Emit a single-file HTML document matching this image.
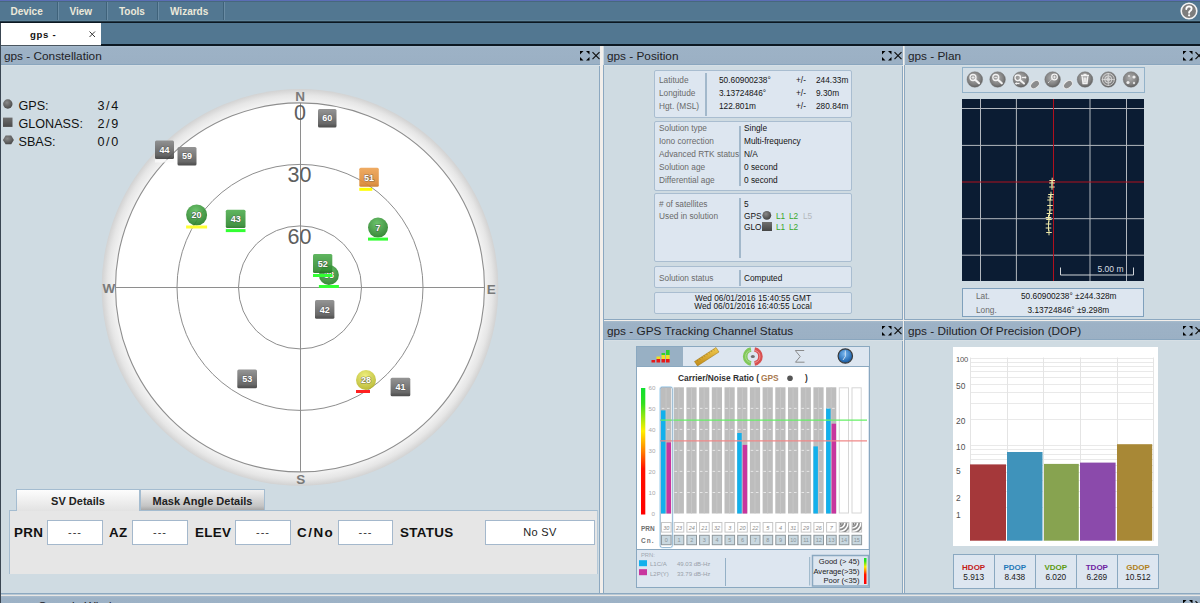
<!DOCTYPE html>
<html><head><meta charset="utf-8">
<style>
*{box-sizing:border-box}
html,body{margin:0;padding:0;width:1200px;height:603px;overflow:hidden;background:#cfdbe2;font-family:"Liberation Sans",sans-serif;position:relative}
.a{position:absolute}
.menu{left:0;top:0;width:1200px;height:23px;background:#527791;border-top:1px solid #5b6db5}
.menu .it{position:absolute;top:1px;height:20px;color:#ece9da;font-weight:bold;font-size:10px;line-height:20px;white-space:nowrap}
.menu .sep{position:absolute;top:1px;width:2px;height:20px;border-left:1px solid #3f627a;border-right:1px solid #6a8ca4}
.tabbar{left:0;top:23px;width:1200px;height:23px;background:#527791}
.hdr{position:absolute;height:19px;background:linear-gradient(#a8bccd,#9db2c6 2px,#9bb0c4);border-bottom:1px solid #8aa6be;box-shadow:0 1px 0 #d6dfe5;font-size:11.8px;color:#1e2226;line-height:21px;padding-left:3px;white-space:nowrap}
.cnt{position:absolute;background:#cfdbe2}
.vb{position:absolute;background:#8ca8c0;width:1px}
.hb{position:absolute;background:#8ca8c0;height:1px}
.wv{position:absolute;background:#f3efeb}
.mx{position:absolute;width:10px;height:10px}
.lab{font-size:13.4px;font-weight:bold;color:#111;line-height:16px;letter-spacing:0.3px}
.inp{height:25px;background:#fff;border:1px solid #a4b8cc;font-size:11px;line-height:23px;text-align:center;color:#333;letter-spacing:1px}
.pbox{background:#dde6f0;border:1px solid #a9bdd0;border-radius:2px}
.pl{font-size:8.3px;line-height:12px;color:#6a6a6a;white-space:nowrap}
.pv{font-size:8.3px;line-height:12px;color:#141414;white-space:nowrap}
.cls{position:absolute;width:8px;height:8px}
</style></head><body>
<!-- menu -->
<div class="a menu">
  <div class="it" style="left:10.5px">Device</div>
  <div class="sep" style="left:57px"></div>
  <div class="it" style="left:69.5px">View</div>
  <div class="sep" style="left:106px"></div>
  <div class="it" style="left:119px">Tools</div>
  <div class="sep" style="left:157px"></div>
  <div class="it" style="left:170px">Wizards</div>
  <div class="sep" style="left:223px"></div>
  <div class="a" style="left:0;top:19px;width:1200px;height:1px;background:#5d8299"></div>
</div>
<div class="a" style="left:0;top:21px;width:1200px;height:1px;background:#243a48"></div><div class="a" style="left:0;top:22px;width:1200px;height:1px;background:#0c1822"></div><div class="a" style="left:0;top:1px;width:1200px;height:1px;background:#46687e"></div>
<!-- help icon -->
<svg class="a" style="left:1180px;top:1.5px" width="18" height="18" viewBox="0 0 18 18">
 <circle cx="9" cy="9" r="7.8" fill="#7d7d7d" stroke="#f4f4f4" stroke-width="1.6"/>
 <path d="M6.3 7.0 Q6.4 4.4 9.1 4.4 Q11.7 4.5 11.6 6.8 Q11.5 8.3 10 9.1 Q9.1 9.6 9.1 10.8" fill="none" stroke="#fff" stroke-width="1.9" stroke-linecap="round"/>
 <circle cx="9.1" cy="13.3" r="1.15" fill="#fff"/>
</svg>
<!-- tab bar -->
<div class="a tabbar"></div>
<div class="a" style="left:0;top:44px;width:1200px;height:2px;background:#0c1822"></div>
<div class="a" style="left:1px;top:23px;width:100px;height:22px;background:#fff"></div>
<div class="a" style="left:0;top:45px;width:101px;height:1px;background:#4a5660"></div>
<div class="a" style="left:30px;top:28px;font-weight:bold;font-size:9.6px;line-height:14px;color:#111;letter-spacing:0.7px">gps -</div>
<svg class="a" style="left:89px;top:31px" width="7" height="7"><path d="M0.5 0.5L6 6M6 0.5L0.5 6" stroke="#222" stroke-width="0.9"/></svg>

<!-- splitters -->
<div class="a" style="left:0;top:23px;width:1px;height:580px;background:#3a4652"></div>
<div class="wv" style="left:600px;top:46px;width:3px;height:547px"></div>
<div class="vb" style="left:599px;top:65px;height:528px"></div>
<div class="vb" style="left:603px;top:65px;height:528px"></div>
<div class="wv" style="left:903px;top:46px;width:1px;height:547px"></div>
<div class="vb" style="left:902px;top:65px;height:528px"></div>
<div class="vb" style="left:904px;top:65px;height:528px"></div>
<div class="wv" style="left:604px;top:320px;width:596px;height:1px"></div>
<div class="hb" style="left:604px;top:319px;width:298px"></div>
<div class="hb" style="left:905px;top:319px;width:295px"></div>
<div class="hb" style="left:1px;top:593px;width:1199px"></div>
<div class="a" style="left:1px;top:594px;width:1199px;height:1px;background:#b8c8d4"></div><div class="a" style="left:1px;top:595px;width:1199px;height:1px;background:#e8e6e4"></div>
<div class="hdr" style="left:1px;top:596px;width:1199px;padding-left:37px">Console Window</div>
<svg class="a" style="left:1183px;top:600px" width="22" height="10"><g fill="#000"><path d="M0 0h3.5L0 3.5z"/><path d="M9.5 0h-3.5L9.5 3.5z"/></g><path d="M12.5 1.2L19.5 8.2M19.5 1.2L12.5 8.2" stroke="#111" stroke-width="1.2"/></svg>

<!-- headers -->
<div class="hdr" style="left:1px;top:46px;width:599px">gps - Constellation</div>
<div class="hdr" style="left:604px;top:46px;width:299px">gps - Position</div>
<div class="hdr" style="left:905px;top:46px;width:295px">gps - Plan</div>
<div class="hdr" style="left:604px;top:321px;width:299px">gps - GPS Tracking Channel Status</div>
<div class="hdr" style="left:905px;top:321px;width:295px">gps - Dilution Of Precision (DOP)</div>

<!-- maximize / close icons -->
<svg class="a" style="left:580px;top:51px" width="22" height="10">
 <g fill="#000"><path d="M0 0h3.5L0 3.5z"/><path d="M9.5 0h-3.5L9.5 3.5z"/><path d="M0 9.5h3.5L0 6z"/><path d="M9.5 9.5h-3.5L9.5 6z"/></g>
 <path d="M12.5 1.2L19.5 8.2M19.5 1.2L12.5 8.2" stroke="#111" stroke-width="1.2"/>
</svg>
<svg class="a" style="left:882px;top:51px" width="22" height="10">
 <g fill="#000"><path d="M0 0h3.5L0 3.5z"/><path d="M9.5 0h-3.5L9.5 3.5z"/><path d="M0 9.5h3.5L0 6z"/><path d="M9.5 9.5h-3.5L9.5 6z"/></g>
 <path d="M12.5 1.2L19.5 8.2M19.5 1.2L12.5 8.2" stroke="#111" stroke-width="1.2"/>
</svg>
<svg class="a" style="left:1183px;top:51px" width="22" height="10">
 <g fill="#000"><path d="M0 0h3.5L0 3.5z"/><path d="M9.5 0h-3.5L9.5 3.5z"/><path d="M0 9.5h3.5L0 6z"/><path d="M9.5 9.5h-3.5L9.5 6z"/></g>
 <path d="M12.5 1.2L19.5 8.2M19.5 1.2L12.5 8.2" stroke="#111" stroke-width="1.2"/>
</svg>
<svg class="a" style="left:882px;top:326px" width="22" height="10">
 <g fill="#000"><path d="M0 0h3.5L0 3.5z"/><path d="M9.5 0h-3.5L9.5 3.5z"/><path d="M0 9.5h3.5L0 6z"/><path d="M9.5 9.5h-3.5L9.5 6z"/></g>
 <path d="M12.5 1.2L19.5 8.2M19.5 1.2L12.5 8.2" stroke="#111" stroke-width="1.2"/>
</svg>
<svg class="a" style="left:1183px;top:326px" width="22" height="10">
 <g fill="#000"><path d="M0 0h3.5L0 3.5z"/><path d="M9.5 0h-3.5L9.5 3.5z"/><path d="M0 9.5h3.5L0 6z"/><path d="M9.5 9.5h-3.5L9.5 6z"/></g>
 <path d="M12.5 1.2L19.5 8.2M19.5 1.2L12.5 8.2" stroke="#111" stroke-width="1.2"/>
</svg>

<!-- CONSTELLATION -->
<svg class="a" style="left:0;top:65px" width="599" height="528" viewBox="0 65 599 528">
<defs>
<radialGradient id="ring" cx="300" cy="287.4" r="198.3" gradientUnits="userSpaceOnUse">
 <stop offset="0.93" stop-color="#f4f4f4"/><stop offset="0.97" stop-color="#e6e6e6"/><stop offset="1" stop-color="#d2d2d2"/>
</radialGradient>
<linearGradient id="gsq" x1="0" y1="0" x2="0" y2="1"><stop offset="0" stop-color="#8a8a8a"/><stop offset="0.8" stop-color="#585858"/><stop offset="0.88" stop-color="#4a4a4a"/><stop offset="1" stop-color="#3a3a3a"/></linearGradient>
<linearGradient id="grsq" x1="0" y1="0" x2="0" y2="1"><stop offset="0" stop-color="#4fae4f"/><stop offset="0.85" stop-color="#2f8a2f"/><stop offset="1" stop-color="#246c24"/></linearGradient>
<linearGradient id="orsq" x1="0" y1="0" x2="0" y2="1"><stop offset="0" stop-color="#eea456"/><stop offset="0.85" stop-color="#dc8a36"/><stop offset="1" stop-color="#c87626"/></linearGradient>
<radialGradient id="grc" cx="0.45" cy="0.3" r="0.7"><stop offset="0" stop-color="#5cbd5c"/><stop offset="1" stop-color="#237a23"/></radialGradient>
<radialGradient id="yec" cx="0.45" cy="0.3" r="0.7"><stop offset="0" stop-color="#eeee70"/><stop offset="1" stop-color="#b4b424"/></radialGradient>
<radialGradient id="lgc" cx="0.4" cy="0.35" r="0.7"><stop offset="0" stop-color="#8a8a8a"/><stop offset="1" stop-color="#4a4a4a"/></radialGradient>
</defs>
<circle cx="300" cy="287.4" r="198.3" fill="url(#ring)"/>
<circle cx="300" cy="287.4" r="184.5" fill="#fff" stroke="#8e8e8e" stroke-width="1.1"/>
<circle cx="300" cy="287.4" r="123.00" fill="none" stroke="#8e8e8e" stroke-width="1"/>
<circle cx="300" cy="287.4" r="61.50" fill="none" stroke="#8e8e8e" stroke-width="1"/>
<path d="M115.5 287.5H484.5M300.5 102.89999999999998V471.9" stroke="#8e8e8e" stroke-width="1"/>
<g style="font-family:'Liberation Sans',sans-serif" fill="#5e5e5e" font-size="21.5" text-anchor="middle">
<text x="300" y="120.3">0</text><text x="299.5" y="182.3">30</text><text x="299.5" y="243.7">60</text></g>
<g style="font-family:'Liberation Sans',sans-serif" fill="#7a7a7a" font-size="13.5" font-weight="bold" text-anchor="middle">
<text x="300" y="101">N</text><text x="108.8" y="293.3">W</text><text x="491.2" y="293.6">E</text><text x="300.8" y="484">S</text></g>
<g opacity="0.9"><rect x="318" y="109" width="18.5" height="18.5" rx="1.5" fill="url(#gsq)"/><text x="327.25" y="121.45" text-anchor="middle" font-size="9" font-weight="bold" fill="#fff" style="font-family:'Liberation Sans',sans-serif" stroke="#3a3a3a" stroke-opacity="0.55" stroke-width="1.2" paint-order="stroke">60</text></g>
<rect x="155" y="159.5" width="19" height="3" fill="#fafafa" opacity="0.8"/>
<g opacity="0.9"><rect x="155" y="140.5" width="19" height="18.5" rx="1.5" fill="url(#gsq)"/><text x="164.5" y="152.95" text-anchor="middle" font-size="9" font-weight="bold" fill="#fff" style="font-family:'Liberation Sans',sans-serif" stroke="#3a3a3a" stroke-opacity="0.55" stroke-width="1.2" paint-order="stroke">44</text></g>
<g opacity="0.9"><rect x="177.5" y="147" width="19" height="18.5" rx="1.5" fill="url(#gsq)"/><text x="187.0" y="159.45" text-anchor="middle" font-size="9" font-weight="bold" fill="#fff" style="font-family:'Liberation Sans',sans-serif" stroke="#3a3a3a" stroke-opacity="0.55" stroke-width="1.2" paint-order="stroke">59</text></g>
<g opacity="0.92"><rect x="359.3" y="167.8" width="19.5" height="19" rx="1.5" fill="url(#orsq)"/><text x="369.05" y="180.5" text-anchor="middle" font-size="9" font-weight="bold" fill="#fff" style="font-family:'Liberation Sans',sans-serif" stroke="#3a3a3a" stroke-opacity="0.55" stroke-width="1.2" paint-order="stroke">51</text></g><rect x="359.3" y="187.8" width="13" height="3" fill="#ffff00"/>
<circle cx="196.6" cy="215" r="10.5" fill="url(#grc)" opacity="0.9"/><text x="196.6" y="218.2" text-anchor="middle" font-size="9" font-weight="bold" fill="#fff" style="font-family:'Liberation Sans',sans-serif" stroke="#3a3a3a" stroke-opacity="0.55" stroke-width="1.2" paint-order="stroke">20</text><rect x="186.1" y="225.5" width="21.0" height="3" fill="#ffff33"/>
<g opacity="0.9"><rect x="225.8" y="209.8" width="19.7" height="18.3" rx="1.5" fill="url(#grsq)"/><text x="235.65" y="222.15" text-anchor="middle" font-size="9" font-weight="bold" fill="#fff" style="font-family:'Liberation Sans',sans-serif" stroke="#3a3a3a" stroke-opacity="0.55" stroke-width="1.2" paint-order="stroke">43</text></g><rect x="225.8" y="229.10000000000002" width="19.7" height="3" fill="#33ff33"/>
<circle cx="378" cy="227.6" r="10" fill="url(#grc)" opacity="0.9"/><text x="378" y="230.79999999999998" text-anchor="middle" font-size="9" font-weight="bold" fill="#fff" style="font-family:'Liberation Sans',sans-serif" stroke="#3a3a3a" stroke-opacity="0.55" stroke-width="1.2" paint-order="stroke">7</text><rect x="368" y="237.6" width="20" height="3" fill="#33ff33"/>
<circle cx="328.9" cy="275" r="10" fill="url(#grc)" opacity="0.9"/><text x="328.9" y="278.2" text-anchor="middle" font-size="9" font-weight="bold" fill="#fff" style="font-family:'Liberation Sans',sans-serif" stroke="#3a3a3a" stroke-opacity="0.55" stroke-width="1.2" paint-order="stroke">38</text><rect x="318.9" y="285" width="20" height="3" fill="#33ff33"/>
<g opacity="0.9"><rect x="313" y="254" width="19.3" height="19" rx="1.5" fill="url(#grsq)"/><text x="322.65" y="266.7" text-anchor="middle" font-size="9" font-weight="bold" fill="#fff" style="font-family:'Liberation Sans',sans-serif" stroke="#3a3a3a" stroke-opacity="0.55" stroke-width="1.2" paint-order="stroke">52</text></g><rect x="313" y="274" width="19.3" height="3" fill="#33ff33"/>
<g opacity="0.9"><rect x="315" y="300" width="19.4" height="18.8" rx="1.5" fill="url(#gsq)"/><text x="324.7" y="312.59999999999997" text-anchor="middle" font-size="9" font-weight="bold" fill="#fff" style="font-family:'Liberation Sans',sans-serif" stroke="#3a3a3a" stroke-opacity="0.55" stroke-width="1.2" paint-order="stroke">42</text></g>
<g opacity="0.9"><rect x="237.3" y="369.5" width="19.7" height="18.7" rx="1.5" fill="url(#gsq)"/><text x="247.15" y="382.05" text-anchor="middle" font-size="9" font-weight="bold" fill="#fff" style="font-family:'Liberation Sans',sans-serif" stroke="#3a3a3a" stroke-opacity="0.55" stroke-width="1.2" paint-order="stroke">53</text></g>
<circle cx="366" cy="380" r="10" fill="url(#yec)" opacity="0.9"/><text x="366" y="383.2" text-anchor="middle" font-size="9" font-weight="bold" fill="#fff" style="font-family:'Liberation Sans',sans-serif" stroke="#3a3a3a" stroke-opacity="0.55" stroke-width="1.2" paint-order="stroke">28</text><rect x="356" y="390" width="14" height="3" fill="#ff2020"/>
<g opacity="0.9"><rect x="390.6" y="377.7" width="19.7" height="18.5" rx="1.5" fill="url(#gsq)"/><text x="400.45000000000005" y="390.15" text-anchor="middle" font-size="9" font-weight="bold" fill="#fff" style="font-family:'Liberation Sans',sans-serif" stroke="#3a3a3a" stroke-opacity="0.55" stroke-width="1.2" paint-order="stroke">41</text></g>
</svg><svg class="a" style="left:2px;top:98px" width="14" height="50">
 <circle cx="5.8" cy="6" r="4.7" fill="url(#lgc2)"/>
 <defs><radialGradient id="lgc2" cx="0.4" cy="0.35" r="0.7"><stop offset="0" stop-color="#8a8a8a"/><stop offset="1" stop-color="#474747"/></radialGradient>
 <linearGradient id="lgs" x1="0" y1="0" x2="0" y2="1"><stop offset="0" stop-color="#6e6e6e"/><stop offset="1" stop-color="#4a4a4a"/></linearGradient></defs>
 <rect x="1" y="19.6" width="9.5" height="9.3" fill="url(#lgs)"/>
 <path d="M3.6 37.5h5.6l2.7 4.4l-2.7 4.3h-5.6l-2.7-4.3z" fill="url(#lgc2)"/>
</svg>
<div class="a" style="left:18.5px;top:96.5px;font-size:12.6px;line-height:18px;color:#111;white-space:nowrap">GPS:<br>GLONASS:<br>SBAS:</div>
<div class="a" style="left:97.5px;top:96.5px;font-size:12.6px;line-height:18px;letter-spacing:1.6px;color:#111;white-space:nowrap">3/4<br>2/9<br>0/0</div>

<div class="a" style="left:9px;top:510px;width:589px;height:64px;background:#e6e6e6;border-top:1px solid #a4bcd0;border-left:1px solid #a4bcd0;border-right:1px solid #b4c8d8"></div>
<div class="a" style="left:16px;top:489px;width:124px;height:22px;background:linear-gradient(#fdfdfd,#e2e2e2);border:1px solid #a4bcd0;border-bottom:none;font-size:11px;font-weight:bold;line-height:22px;text-align:center;color:#222">SV Details</div>
<div class="a" style="left:140px;top:489px;width:125px;height:21px;background:linear-gradient(#f2f2f2,#c4c4c4 80%,#a8a8a8);border:1px solid #a4bcd0;border-bottom:none;font-size:11px;font-weight:bold;line-height:22px;text-align:center;color:#222">Mask Angle Details</div>
<div class="a lab" style="left:14px;top:525px">PRN</div>
<div class="a inp" style="left:47px;top:520px;width:56px">---</div>
<div class="a lab" style="left:109px;top:525px">AZ</div>
<div class="a inp" style="left:132px;top:520px;width:56px">---</div>
<div class="a lab" style="left:195px;top:525px">ELEV</div>
<div class="a inp" style="left:235px;top:520px;width:56px">---</div>
<div class="a lab" style="left:297px;top:525px;letter-spacing:1.5px">C/No</div>
<div class="a inp" style="left:338px;top:520px;width:55px">---</div>
<div class="a lab" style="left:400px;top:525px">STATUS</div>
<div class="a inp" style="left:485px;top:520px;width:110px;font-weight:normal;font-size:11px;color:#222;letter-spacing:0.3px">No SV</div>


<!-- POSITION -->
<div class="a pbox" style="left:654px;top:70px;width:198px;height:48px"></div>
<div class="a" style="left:705px;top:73px;width:2px;height:43px;background:#a2b8cb"></div>
<div class="a pl" style="left:659px;top:74px;">Latitude</div>
<div class="a pv" style="left:719px;top:74px;">50.60900238°</div>
<div class="a pv" style="left:796px;top:74px;">+/-</div>
<div class="a pv" style="left:816px;top:74px;">244.33m</div>
<div class="a pl" style="left:659px;top:87px;">Longitude</div>
<div class="a pv" style="left:719px;top:87px;">3.13724846°</div>
<div class="a pv" style="left:796px;top:87px;">+/-</div>
<div class="a pv" style="left:816px;top:87px;">9.30m</div>
<div class="a pl" style="left:659px;top:100px;">Hgt. (MSL)</div>
<div class="a pv" style="left:719px;top:100px;">122.801m</div>
<div class="a pv" style="left:796px;top:100px;">+/-</div>
<div class="a pv" style="left:816px;top:100px;">280.84m</div>
<div class="a pbox" style="left:654px;top:121px;width:198px;height:70px"></div>
<div class="a" style="left:739px;top:126px;width:2px;height:60px;background:#a2b8cb"></div>
<div class="a pl" style="left:659px;top:122.0px;">Solution type</div>
<div class="a pv" style="left:744px;top:122.0px;">Single</div>
<div class="a pl" style="left:659px;top:135.1px;">Iono correction</div>
<div class="a pv" style="left:744px;top:135.1px;">Multi-frequency</div>
<div class="a pl" style="left:659px;top:148.1px;">Advanced RTK status</div>
<div class="a pv" style="left:744px;top:148.1px;">N/A</div>
<div class="a pl" style="left:659px;top:161.2px;">Solution age</div>
<div class="a pv" style="left:744px;top:161.2px;">0 second</div>
<div class="a pl" style="left:659px;top:174.2px;">Differential age</div>
<div class="a pv" style="left:744px;top:174.2px;">0 second</div>
<div class="a pbox" style="left:654px;top:193px;width:198px;height:69px"></div>
<div class="a" style="left:739px;top:198px;width:2px;height:60px;background:#a2b8cb"></div>
<div class="a pl" style="left:659px;top:198px;"># of satellites</div>
<div class="a pl" style="left:659px;top:209.5px;">Used in solution</div>
<div class="a pv" style="left:744px;top:198px;">5</div>
<div class="a pv" style="left:744px;top:209.5px;">GPS</div>
<div class="a pv" style="left:744px;top:220.5px;">GLO</div>
<svg class="a" style="left:760px;top:209px" width="60" height="24">
<defs><radialGradient id="pgc" cx="0.4" cy="0.35" r="0.7"><stop offset="0" stop-color="#8a8a8a"/><stop offset="1" stop-color="#3e3e3e"/></radialGradient>
<linearGradient id="pgs" x1="0" y1="0" x2="0" y2="1"><stop offset="0" stop-color="#707070"/><stop offset="1" stop-color="#454545"/></linearGradient></defs>
<circle cx="6.8" cy="6.3" r="4.4" fill="url(#pgc)"/>
<rect x="2" y="13" width="10" height="9" fill="url(#pgs)"/>
</svg>
<div class="a pv" style="left:776px;top:209.5px;color:#3aa82a">L1</div>
<div class="a pv" style="left:789px;top:209.5px;color:#3aa82a">L2</div>
<div class="a pv" style="left:803px;top:209.5px;color:#b4b8bc">L5</div>
<div class="a pv" style="left:776px;top:220.5px;color:#3aa82a">L1</div>
<div class="a pv" style="left:789px;top:220.5px;color:#3aa82a">L2</div>
<div class="a pbox" style="left:654px;top:266px;width:198px;height:22px"></div>
<div class="a" style="left:739px;top:270px;width:2px;height:16px;background:#a2b8cb"></div>
<div class="a pl" style="left:659px;top:271.5px;">Solution status</div>
<div class="a pv" style="left:744px;top:271.5px;">Computed</div>
<div class="a pbox" style="left:654px;top:292px;width:198px;height:22px"></div>
<div class="a pv" style="left:654px;top:292px;width:198px;text-align:center;line-height:7.6px;padding-top:3px">Wed 06/01/2016 15:40:55 GMT<br>Wed 06/01/2016 16:40:55 Local</div>

<!-- PLAN -->
<div class="a" style="left:962px;top:67px;width:183px;height:26px;background:#d3dee6;border:1px solid #93b2c9"></div>
<svg class="a" style="left:962px;top:67px" width="183" height="26" viewBox="962 67 183 26">
<defs><radialGradient id="tb" cx="0.45" cy="0.4" r="0.7"><stop offset="0" stop-color="#b0b0b0"/><stop offset="0.6" stop-color="#808080"/><stop offset="1" stop-color="#505050"/></radialGradient>
<radialGradient id="tp" cx="0.4" cy="0.3" r="0.8"><stop offset="0" stop-color="#bdbdbd"/><stop offset="1" stop-color="#707070"/></radialGradient></defs>
<circle cx="974.8" cy="79.5" r="7.8" fill="url(#tb)" stroke="#6a6a6a" stroke-width="0.4"/>
<circle cx="997.6" cy="79.5" r="7.8" fill="url(#tb)" stroke="#6a6a6a" stroke-width="0.4"/>
<circle cx="1020.9" cy="79.5" r="7.8" fill="url(#tb)" stroke="#6a6a6a" stroke-width="0.4"/>
<circle cx="1052.6" cy="79.5" r="7.8" fill="url(#tb)" stroke="#6a6a6a" stroke-width="0.4"/>
<circle cx="1085" cy="79.5" r="7.8" fill="url(#tb)" stroke="#6a6a6a" stroke-width="0.4"/>
<circle cx="1108.3" cy="79.5" r="7.8" fill="url(#tb)" stroke="#6a6a6a" stroke-width="0.4"/>
<circle cx="1131" cy="79.5" r="7.8" fill="url(#tb)" stroke="#6a6a6a" stroke-width="0.4"/>
<circle cx="973" cy="77.5" r="3" stroke="#f2f2f2" fill="none" stroke-width="1.3"/><path d="M975.2 79.7L979 83.3" stroke="#f2f2f2" stroke-width="2.2" stroke-linecap="round"/><path d="M971.5 77.5h3M973 76v3" stroke="#f2f2f2" stroke-width="0.8"/>
<circle cx="995.8" cy="77.5" r="3" stroke="#f2f2f2" fill="none" stroke-width="1.3"/><path d="M998 79.7L1001.8 83.3" stroke="#f2f2f2" stroke-width="2.2" stroke-linecap="round"/><path d="M994.3 77.5h3" stroke="#f2f2f2" stroke-width="0.8"/>
<circle cx="1017.8" cy="77.8" r="2.8" stroke="#f2f2f2" fill="none" stroke-width="1.3"/><path d="M1020 80L1024 83.5" stroke="#f2f2f2" stroke-width="2" stroke-linecap="round"/><path d="M1022 77.5h4" stroke="#f2f2f2" stroke-width="1.2"/><path d="M1026.5 77.5l-1.6-1.4v2.8z" fill="#f2f2f2"/><path d="M1015.5 83.5h4" stroke="#f2f2f2" stroke-width="1.2"/><path d="M1015 83.5l1.6-1.4v2.8z" fill="#f2f2f2"/>
<circle cx="1054.5" cy="77" r="2.8" stroke="#f2f2f2" fill="none" stroke-width="1.3"/><path d="M1053 77h3M1054.5 75.5v3" stroke="#f2f2f2" stroke-width="0.8"/><path d="M1048 83l1.5 -1.5M1050.5 80.5l1.3-1.3" stroke="#e0e0e0" stroke-width="0.9"/>
<path d="M1081 75.5h8M1082.2 76.5l0.8 7h4l0.8-7M1083.5 74.5h3M1084.2 77.5v5M1085.8 77.5v5" stroke="#f2f2f2" fill="none" stroke-width="1.3"/>
<circle cx="1108.3" cy="79.5" r="6" stroke="#e8e8e8" fill="none" stroke-width="0.7"/><circle cx="1108.3" cy="79.5" r="3.6" stroke="#e8e8e8" fill="none" stroke-width="0.7"/><circle cx="1108.3" cy="79.5" r="1.4" stroke="#e8e8e8" fill="none" stroke-width="0.7"/><path d="M1101.8 79.5h13M1108.3 73v13" stroke="#e8e8e8" stroke-width="0.6"/>
<circle cx="1128" cy="82.5" r="1.6" fill="#eee"/><circle cx="1134" cy="77" r="1.6" fill="#eee"/><circle cx="1129" cy="76" r="1.1" fill="#ddd"/><circle cx="1134" cy="83" r="1.2" fill="#ddd"/>
<ellipse cx="1035" cy="84.6" rx="5" ry="3.4" transform="rotate(-40 1035 84.6)" fill="#8c8c8c" stroke="#eaeaea" stroke-width="1"/>
<ellipse cx="1068" cy="84.6" rx="5" ry="3.4" transform="rotate(-40 1068 84.6)" fill="#8c8c8c" stroke="#eaeaea" stroke-width="1"/>
</svg>
<svg class="a" style="left:962px;top:99px" width="182" height="182" viewBox="962 99 182 182">
<rect x="962" y="99" width="182" height="182" fill="#0b1c33"/>
<path d="M980.5 99V281" stroke="#b2b7be" stroke-width="1"/>
<path d="M1016.4 99V281" stroke="#b2b7be" stroke-width="1"/>
<path d="M1090 99V281" stroke="#b2b7be" stroke-width="1"/>
<path d="M1126.5 99V281" stroke="#b2b7be" stroke-width="1"/>
<path d="M962 108.5H1144" stroke="#b2b7be" stroke-width="1"/>
<path d="M962 145.4H1144" stroke="#b2b7be" stroke-width="1"/>
<path d="M962 218.7H1144" stroke="#b2b7be" stroke-width="1"/>
<path d="M962 255.2H1144" stroke="#b2b7be" stroke-width="1"/>
<path d="M1053.5 99V281M962 182H1144" stroke="#b0101e" stroke-width="1"/>
<path d="M1049.4 180.5h5.6M1052.2 177.7v5.6" stroke="#eee8a8" stroke-width="1"/>
<path d="M1049.2 183h5.6M1052 180.2v5.6" stroke="#eee8a8" stroke-width="1"/>
<path d="M1049.2 187h5.6M1052 184.2v5.6" stroke="#eee8a8" stroke-width="1"/>
<path d="M1048.2 194.5h5.6M1051 191.7v5.6" stroke="#eee8a8" stroke-width="1"/>
<path d="M1047.7 197h5.6M1050.5 194.2v5.6" stroke="#eee8a8" stroke-width="1"/>
<path d="M1047.2 200h5.6M1050 197.2v5.6" stroke="#eee8a8" stroke-width="1"/>
<path d="M1047.2 205.5h5.6M1050 202.7v5.6" stroke="#eee8a8" stroke-width="1"/>
<path d="M1047.2 210h5.6M1050 207.2v5.6" stroke="#eee8a8" stroke-width="1"/>
<path d="M1046.7 213.5h5.6M1049.5 210.7v5.6" stroke="#eee8a8" stroke-width="1"/>
<path d="M1045.7 217.5h5.6M1048.5 214.7v5.6" stroke="#eee8a8" stroke-width="1"/>
<path d="M1046.2 219.5h5.6M1049 216.7v5.6" stroke="#eee8a8" stroke-width="1"/>
<path d="M1045.7 224h5.6M1048.5 221.2v5.6" stroke="#eee8a8" stroke-width="1"/>
<path d="M1045.7 228h5.6M1048.5 225.2v5.6" stroke="#eee8a8" stroke-width="1"/>
<path d="M1046.2 232.5h5.6M1049 229.7v5.6" stroke="#eee8a8" stroke-width="1"/>
<path d="M1060.5 267.5V275H1133.5V267.5" fill="none" stroke="#d0d4d8" stroke-width="1"/>
<text x="1097.5" y="272.3" font-size="8.5" fill="#d8dce0" style="font-family:'Liberation Sans',sans-serif">5.00 m</text>
</svg>
<div class="a" style="left:962px;top:288px;width:182px;height:29px;background:#dde6f0;border:1.5px solid #7fa0bc"></div>
<div class="a pl" style="left:976px;top:290px">Lat.</div><div class="a pv" style="left:1021px;top:290px">50.60900238° ±244.328m</div>
<div class="a pl" style="left:976px;top:303.5px">Long.</div><div class="a pv" style="left:1027.5px;top:303.5px">3.13724846° ±9.298m</div>

<!-- TRACKING -->
<div class="a" style="left:636px;top:346px;width:234px;height:242px;background:#dde6f0;border:1px solid #8aa8c0"></div>
<div class="a" style="left:637px;top:347px;width:46px;height:19px;background:#98b0c4"></div>
<div class="a" style="left:637px;top:366px;width:232px;height:1px;background:#8aa8c0"></div>
<div class="a" style="left:637px;top:367px;width:231px;height:182px;background:#fff"></div>
<div class="a" style="left:637px;top:549px;width:232px;height:1px;background:#8aa8c0"></div>
<svg class="a" style="left:636px;top:346px" width="234" height="242" viewBox="636 346 234 242">
<defs>
<linearGradient id="cbar" x1="0" y1="0" x2="0" y2="1"><stop offset="0" stop-color="#10e030"/><stop offset="0.12" stop-color="#30e020"/><stop offset="0.34" stop-color="#fff000"/><stop offset="0.5" stop-color="#ff8000"/><stop offset="0.64" stop-color="#ff1000"/><stop offset="1" stop-color="#ff0000"/></linearGradient>
<linearGradient id="rul" x1="0" y1="0" x2="0" y2="1"><stop offset="0" stop-color="#f2cc50"/><stop offset="1" stop-color="#c08a18"/></linearGradient>
<radialGradient id="clk" cx="0.45" cy="0.35" r="0.7"><stop offset="0" stop-color="#7ab8f0"/><stop offset="0.7" stop-color="#2a70b8"/><stop offset="1" stop-color="#1a4a80"/></radialGradient>
</defs>
<rect x="651.5" y="360" width="3.6" height="2.5" fill="#e81818"/>
<rect x="656.5" y="356.5" width="3.6" height="2.5" fill="#f0e020"/>
<rect x="656.5" y="359" width="3.6" height="3.5" fill="#e81818"/>
<rect x="661.5" y="353" width="3.6" height="2" fill="#30d030"/>
<rect x="661.5" y="355" width="3.6" height="4" fill="#f0e020"/>
<rect x="661.5" y="359" width="3.6" height="3.5" fill="#e81818"/>
<rect x="666" y="350" width="3.6" height="5" fill="#30d030"/>
<rect x="666" y="355" width="3.6" height="4" fill="#f0e020"/>
<rect x="666" y="359" width="3.6" height="3.5" fill="#e81818"/>
<path d="M694.5 361.5L716 347.5L719 352L697.5 366z" fill="url(#rul)" stroke="#9a7010" stroke-width="0.5"/>
<path d="M697.0 360.0l0.8 1.3" stroke="#8a6010" stroke-width="0.5"/>
<path d="M699.4 358.4l0.8 1.3" stroke="#8a6010" stroke-width="0.5"/>
<path d="M701.8 356.9l0.8 1.3" stroke="#8a6010" stroke-width="0.5"/>
<path d="M704.1 355.4l0.8 1.3" stroke="#8a6010" stroke-width="0.5"/>
<path d="M706.5 353.8l0.8 1.3" stroke="#8a6010" stroke-width="0.5"/>
<path d="M708.9 352.2l0.8 1.3" stroke="#8a6010" stroke-width="0.5"/>
<path d="M711.2 350.7l0.8 1.3" stroke="#8a6010" stroke-width="0.5"/>
<path d="M713.6 349.1l0.8 1.3" stroke="#8a6010" stroke-width="0.5"/>
<path d="M751 349.6A7 7 0 0 0 751 363.4" fill="none" stroke="#80c858" stroke-width="4.6"/><path d="M750.6 350.6A6 6 0 0 0 750.6 362.4" fill="none" stroke="#b8e0a0" stroke-width="0.8"/>
<path d="M754.6 349.6A7 7 0 0 1 754.6 363.4" fill="none" stroke="#d85050" stroke-width="4.6"/><path d="M755 350.6A6 6 0 0 1 755 362.4" fill="none" stroke="#f0a0a0" stroke-width="0.8"/>
<ellipse cx="752.8" cy="356.5" rx="2" ry="1.6" fill="#707070"/>
<path d="M795.2 350.5H804.2M795.5 350.8L800.2 356.5L795.5 362.2H804.5" fill="none" stroke="#808080" stroke-width="0.9"/>
<circle cx="845.3" cy="356" r="7.2" fill="url(#clk)" stroke="#3a3a3a" stroke-width="1.2"/><path d="M845.3 350.5V356.5L843 360" stroke="#e8f0f8" stroke-width="0.8" fill="none"/>
<text x="678" y="381" font-size="8.4" font-weight="bold" fill="#303030" style="font-family:'Liberation Sans',sans-serif">Carrier/Noise Ratio (</text>
<text x="761" y="381" font-size="8.4" font-weight="bold" fill="#a87a50" style="font-family:'Liberation Sans',sans-serif">GPS</text>
<circle cx="790" cy="378.3" r="2.8" fill="#555"/>
<text x="805" y="381" font-size="8.4" font-weight="bold" fill="#303030" style="font-family:'Liberation Sans',sans-serif">)</text>
<rect x="641" y="388" width="4.3" height="126.5" fill="url(#cbar)"/>
<text x="655.5" y="389.6" font-size="6.2" fill="#a8a8a8" text-anchor="end" style="font-family:'Liberation Sans',sans-serif">60</text>
<text x="655.5" y="410.7" font-size="6.2" fill="#a8a8a8" text-anchor="end" style="font-family:'Liberation Sans',sans-serif">50</text>
<text x="655.5" y="431.7" font-size="6.2" fill="#a8a8a8" text-anchor="end" style="font-family:'Liberation Sans',sans-serif">40</text>
<text x="655.5" y="452.7" font-size="6.2" fill="#a8a8a8" text-anchor="end" style="font-family:'Liberation Sans',sans-serif">30</text>
<text x="655.5" y="473.7" font-size="6.2" fill="#a8a8a8" text-anchor="end" style="font-family:'Liberation Sans',sans-serif">20</text>
<text x="655.5" y="494.8" font-size="6.2" fill="#a8a8a8" text-anchor="end" style="font-family:'Liberation Sans',sans-serif">10</text>
<text x="655" y="515.8" font-size="6.2" fill="#a8a8a8" text-anchor="end" style="font-family:'Liberation Sans',sans-serif">0</text>
<rect x="661.0" y="387.3" width="10.2" height="126.2" fill="#bdbdbd"/>
<path d="M666.1 387.3V513.5" stroke="#c9c9c9" stroke-width="0.8"/>
<path d="M661.8 408.4h2.6M667.0 408.4h2.6" stroke="#e6e6e6" stroke-width="1"/>
<path d="M661.8 429.4h2.6M667.0 429.4h2.6" stroke="#e6e6e6" stroke-width="1"/>
<path d="M661.8 450.4h2.6M667.0 450.4h2.6" stroke="#e6e6e6" stroke-width="1"/>
<path d="M661.8 471.4h2.6M667.0 471.4h2.6" stroke="#e6e6e6" stroke-width="1"/>
<path d="M661.8 492.5h2.6M667.0 492.5h2.6" stroke="#e6e6e6" stroke-width="1"/>
<rect x="661.0" y="410.4" width="4.5" height="103.1" fill="#12b0ec"/>
<rect x="666.5" y="442.4" width="4.5" height="71.1" fill="#c8359e"/>
<rect x="661.5" y="522.5" width="9.6" height="9.6" fill="#fff" stroke="#c6c6c6" stroke-width="1"/>
<rect x="661.5" y="535.3" width="9.6" height="9.4" fill="#c9d8e0" stroke="#8e979c" stroke-width="1"/>
<rect x="673.7" y="387.3" width="10.2" height="126.2" fill="#bdbdbd"/>
<path d="M678.8 387.3V513.5" stroke="#c9c9c9" stroke-width="0.8"/>
<path d="M674.5 408.4h2.6M679.7 408.4h2.6" stroke="#e6e6e6" stroke-width="1"/>
<path d="M674.5 429.4h2.6M679.7 429.4h2.6" stroke="#e6e6e6" stroke-width="1"/>
<path d="M674.5 450.4h2.6M679.7 450.4h2.6" stroke="#e6e6e6" stroke-width="1"/>
<path d="M674.5 471.4h2.6M679.7 471.4h2.6" stroke="#e6e6e6" stroke-width="1"/>
<path d="M674.5 492.5h2.6M679.7 492.5h2.6" stroke="#e6e6e6" stroke-width="1"/>
<rect x="674.2" y="522.5" width="9.6" height="9.6" fill="#fff" stroke="#c6c6c6" stroke-width="1"/>
<rect x="674.2" y="535.3" width="9.6" height="9.4" fill="#c9d8e0" stroke="#8e979c" stroke-width="1"/>
<rect x="686.4" y="387.3" width="10.2" height="126.2" fill="#bdbdbd"/>
<path d="M691.5 387.3V513.5" stroke="#c9c9c9" stroke-width="0.8"/>
<path d="M687.2 408.4h2.6M692.4 408.4h2.6" stroke="#e6e6e6" stroke-width="1"/>
<path d="M687.2 429.4h2.6M692.4 429.4h2.6" stroke="#e6e6e6" stroke-width="1"/>
<path d="M687.2 450.4h2.6M692.4 450.4h2.6" stroke="#e6e6e6" stroke-width="1"/>
<path d="M687.2 471.4h2.6M692.4 471.4h2.6" stroke="#e6e6e6" stroke-width="1"/>
<path d="M687.2 492.5h2.6M692.4 492.5h2.6" stroke="#e6e6e6" stroke-width="1"/>
<rect x="686.9" y="522.5" width="9.6" height="9.6" fill="#fff" stroke="#c6c6c6" stroke-width="1"/>
<rect x="686.9" y="535.3" width="9.6" height="9.4" fill="#c9d8e0" stroke="#8e979c" stroke-width="1"/>
<rect x="699.1" y="387.3" width="10.2" height="126.2" fill="#bdbdbd"/>
<path d="M704.2 387.3V513.5" stroke="#c9c9c9" stroke-width="0.8"/>
<path d="M699.9 408.4h2.6M705.1 408.4h2.6" stroke="#e6e6e6" stroke-width="1"/>
<path d="M699.9 429.4h2.6M705.1 429.4h2.6" stroke="#e6e6e6" stroke-width="1"/>
<path d="M699.9 450.4h2.6M705.1 450.4h2.6" stroke="#e6e6e6" stroke-width="1"/>
<path d="M699.9 471.4h2.6M705.1 471.4h2.6" stroke="#e6e6e6" stroke-width="1"/>
<path d="M699.9 492.5h2.6M705.1 492.5h2.6" stroke="#e6e6e6" stroke-width="1"/>
<rect x="699.6" y="522.5" width="9.6" height="9.6" fill="#fff" stroke="#c6c6c6" stroke-width="1"/>
<rect x="699.6" y="535.3" width="9.6" height="9.4" fill="#c9d8e0" stroke="#8e979c" stroke-width="1"/>
<rect x="711.8" y="387.3" width="10.2" height="126.2" fill="#bdbdbd"/>
<path d="M716.9 387.3V513.5" stroke="#c9c9c9" stroke-width="0.8"/>
<path d="M712.6 408.4h2.6M717.8 408.4h2.6" stroke="#e6e6e6" stroke-width="1"/>
<path d="M712.6 429.4h2.6M717.8 429.4h2.6" stroke="#e6e6e6" stroke-width="1"/>
<path d="M712.6 450.4h2.6M717.8 450.4h2.6" stroke="#e6e6e6" stroke-width="1"/>
<path d="M712.6 471.4h2.6M717.8 471.4h2.6" stroke="#e6e6e6" stroke-width="1"/>
<path d="M712.6 492.5h2.6M717.8 492.5h2.6" stroke="#e6e6e6" stroke-width="1"/>
<rect x="712.3" y="522.5" width="9.6" height="9.6" fill="#fff" stroke="#c6c6c6" stroke-width="1"/>
<rect x="712.3" y="535.3" width="9.6" height="9.4" fill="#c9d8e0" stroke="#8e979c" stroke-width="1"/>
<rect x="724.5" y="387.3" width="10.2" height="126.2" fill="#bdbdbd"/>
<path d="M729.6 387.3V513.5" stroke="#c9c9c9" stroke-width="0.8"/>
<path d="M725.3 408.4h2.6M730.5 408.4h2.6" stroke="#e6e6e6" stroke-width="1"/>
<path d="M725.3 429.4h2.6M730.5 429.4h2.6" stroke="#e6e6e6" stroke-width="1"/>
<path d="M725.3 450.4h2.6M730.5 450.4h2.6" stroke="#e6e6e6" stroke-width="1"/>
<path d="M725.3 471.4h2.6M730.5 471.4h2.6" stroke="#e6e6e6" stroke-width="1"/>
<path d="M725.3 492.5h2.6M730.5 492.5h2.6" stroke="#e6e6e6" stroke-width="1"/>
<rect x="725.0" y="522.5" width="9.6" height="9.6" fill="#fff" stroke="#c6c6c6" stroke-width="1"/>
<rect x="725.0" y="535.3" width="9.6" height="9.4" fill="#c9d8e0" stroke="#8e979c" stroke-width="1"/>
<rect x="737.2" y="387.3" width="10.2" height="126.2" fill="#bdbdbd"/>
<path d="M742.3 387.3V513.5" stroke="#c9c9c9" stroke-width="0.8"/>
<path d="M738.0 408.4h2.6M743.2 408.4h2.6" stroke="#e6e6e6" stroke-width="1"/>
<path d="M738.0 429.4h2.6M743.2 429.4h2.6" stroke="#e6e6e6" stroke-width="1"/>
<path d="M738.0 450.4h2.6M743.2 450.4h2.6" stroke="#e6e6e6" stroke-width="1"/>
<path d="M738.0 471.4h2.6M743.2 471.4h2.6" stroke="#e6e6e6" stroke-width="1"/>
<path d="M738.0 492.5h2.6M743.2 492.5h2.6" stroke="#e6e6e6" stroke-width="1"/>
<rect x="737.2" y="433.0" width="4.5" height="80.5" fill="#12b0ec"/>
<rect x="742.7" y="444.9" width="4.5" height="68.6" fill="#c8359e"/>
<rect x="737.7" y="522.5" width="9.6" height="9.6" fill="#fff" stroke="#c6c6c6" stroke-width="1"/>
<rect x="737.7" y="535.3" width="9.6" height="9.4" fill="#c9d8e0" stroke="#8e979c" stroke-width="1"/>
<rect x="749.9" y="387.3" width="10.2" height="126.2" fill="#bdbdbd"/>
<path d="M755.0 387.3V513.5" stroke="#c9c9c9" stroke-width="0.8"/>
<path d="M750.7 408.4h2.6M755.9 408.4h2.6" stroke="#e6e6e6" stroke-width="1"/>
<path d="M750.7 429.4h2.6M755.9 429.4h2.6" stroke="#e6e6e6" stroke-width="1"/>
<path d="M750.7 450.4h2.6M755.9 450.4h2.6" stroke="#e6e6e6" stroke-width="1"/>
<path d="M750.7 471.4h2.6M755.9 471.4h2.6" stroke="#e6e6e6" stroke-width="1"/>
<path d="M750.7 492.5h2.6M755.9 492.5h2.6" stroke="#e6e6e6" stroke-width="1"/>
<rect x="750.4" y="522.5" width="9.6" height="9.6" fill="#fff" stroke="#c6c6c6" stroke-width="1"/>
<rect x="750.4" y="535.3" width="9.6" height="9.4" fill="#c9d8e0" stroke="#8e979c" stroke-width="1"/>
<rect x="762.6" y="387.3" width="10.2" height="126.2" fill="#bdbdbd"/>
<path d="M767.7 387.3V513.5" stroke="#c9c9c9" stroke-width="0.8"/>
<path d="M763.4 408.4h2.6M768.6 408.4h2.6" stroke="#e6e6e6" stroke-width="1"/>
<path d="M763.4 429.4h2.6M768.6 429.4h2.6" stroke="#e6e6e6" stroke-width="1"/>
<path d="M763.4 450.4h2.6M768.6 450.4h2.6" stroke="#e6e6e6" stroke-width="1"/>
<path d="M763.4 471.4h2.6M768.6 471.4h2.6" stroke="#e6e6e6" stroke-width="1"/>
<path d="M763.4 492.5h2.6M768.6 492.5h2.6" stroke="#e6e6e6" stroke-width="1"/>
<rect x="763.1" y="522.5" width="9.6" height="9.6" fill="#fff" stroke="#c6c6c6" stroke-width="1"/>
<rect x="763.1" y="535.3" width="9.6" height="9.4" fill="#c9d8e0" stroke="#8e979c" stroke-width="1"/>
<rect x="775.3" y="387.3" width="10.2" height="126.2" fill="#bdbdbd"/>
<path d="M780.4 387.3V513.5" stroke="#c9c9c9" stroke-width="0.8"/>
<path d="M776.1 408.4h2.6M781.3 408.4h2.6" stroke="#e6e6e6" stroke-width="1"/>
<path d="M776.1 429.4h2.6M781.3 429.4h2.6" stroke="#e6e6e6" stroke-width="1"/>
<path d="M776.1 450.4h2.6M781.3 450.4h2.6" stroke="#e6e6e6" stroke-width="1"/>
<path d="M776.1 471.4h2.6M781.3 471.4h2.6" stroke="#e6e6e6" stroke-width="1"/>
<path d="M776.1 492.5h2.6M781.3 492.5h2.6" stroke="#e6e6e6" stroke-width="1"/>
<rect x="775.8" y="522.5" width="9.6" height="9.6" fill="#fff" stroke="#c6c6c6" stroke-width="1"/>
<rect x="775.8" y="535.3" width="9.6" height="9.4" fill="#c9d8e0" stroke="#8e979c" stroke-width="1"/>
<rect x="788.0" y="387.3" width="10.2" height="126.2" fill="#bdbdbd"/>
<path d="M793.1 387.3V513.5" stroke="#c9c9c9" stroke-width="0.8"/>
<path d="M788.8 408.4h2.6M794.0 408.4h2.6" stroke="#e6e6e6" stroke-width="1"/>
<path d="M788.8 429.4h2.6M794.0 429.4h2.6" stroke="#e6e6e6" stroke-width="1"/>
<path d="M788.8 450.4h2.6M794.0 450.4h2.6" stroke="#e6e6e6" stroke-width="1"/>
<path d="M788.8 471.4h2.6M794.0 471.4h2.6" stroke="#e6e6e6" stroke-width="1"/>
<path d="M788.8 492.5h2.6M794.0 492.5h2.6" stroke="#e6e6e6" stroke-width="1"/>
<rect x="788.5" y="522.5" width="9.6" height="9.6" fill="#fff" stroke="#c6c6c6" stroke-width="1"/>
<rect x="788.5" y="535.3" width="9.6" height="9.4" fill="#c9d8e0" stroke="#8e979c" stroke-width="1"/>
<rect x="800.7" y="387.3" width="10.2" height="126.2" fill="#bdbdbd"/>
<path d="M805.8 387.3V513.5" stroke="#c9c9c9" stroke-width="0.8"/>
<path d="M801.5 408.4h2.6M806.7 408.4h2.6" stroke="#e6e6e6" stroke-width="1"/>
<path d="M801.5 429.4h2.6M806.7 429.4h2.6" stroke="#e6e6e6" stroke-width="1"/>
<path d="M801.5 450.4h2.6M806.7 450.4h2.6" stroke="#e6e6e6" stroke-width="1"/>
<path d="M801.5 471.4h2.6M806.7 471.4h2.6" stroke="#e6e6e6" stroke-width="1"/>
<path d="M801.5 492.5h2.6M806.7 492.5h2.6" stroke="#e6e6e6" stroke-width="1"/>
<rect x="801.2" y="522.5" width="9.6" height="9.6" fill="#fff" stroke="#c6c6c6" stroke-width="1"/>
<rect x="801.2" y="535.3" width="9.6" height="9.4" fill="#c9d8e0" stroke="#8e979c" stroke-width="1"/>
<rect x="813.4" y="387.3" width="10.2" height="126.2" fill="#bdbdbd"/>
<path d="M818.5 387.3V513.5" stroke="#c9c9c9" stroke-width="0.8"/>
<path d="M814.2 408.4h2.6M819.4 408.4h2.6" stroke="#e6e6e6" stroke-width="1"/>
<path d="M814.2 429.4h2.6M819.4 429.4h2.6" stroke="#e6e6e6" stroke-width="1"/>
<path d="M814.2 450.4h2.6M819.4 450.4h2.6" stroke="#e6e6e6" stroke-width="1"/>
<path d="M814.2 471.4h2.6M819.4 471.4h2.6" stroke="#e6e6e6" stroke-width="1"/>
<path d="M814.2 492.5h2.6M819.4 492.5h2.6" stroke="#e6e6e6" stroke-width="1"/>
<rect x="813.4" y="446.4" width="4.5" height="67.1" fill="#12b0ec"/>
<rect x="813.9" y="522.5" width="9.6" height="9.6" fill="#fff" stroke="#c6c6c6" stroke-width="1"/>
<rect x="813.9" y="535.3" width="9.6" height="9.4" fill="#c9d8e0" stroke="#8e979c" stroke-width="1"/>
<rect x="826.1" y="387.3" width="10.2" height="126.2" fill="#bdbdbd"/>
<path d="M831.2 387.3V513.5" stroke="#c9c9c9" stroke-width="0.8"/>
<path d="M826.9 408.4h2.6M832.1 408.4h2.6" stroke="#e6e6e6" stroke-width="1"/>
<path d="M826.9 429.4h2.6M832.1 429.4h2.6" stroke="#e6e6e6" stroke-width="1"/>
<path d="M826.9 450.4h2.6M832.1 450.4h2.6" stroke="#e6e6e6" stroke-width="1"/>
<path d="M826.9 471.4h2.6M832.1 471.4h2.6" stroke="#e6e6e6" stroke-width="1"/>
<path d="M826.9 492.5h2.6M832.1 492.5h2.6" stroke="#e6e6e6" stroke-width="1"/>
<rect x="826.1" y="408.6" width="4.5" height="104.9" fill="#12b0ec"/>
<rect x="831.6" y="423.7" width="4.5" height="89.8" fill="#c8359e"/>
<rect x="826.6" y="522.5" width="9.6" height="9.6" fill="#fff" stroke="#c6c6c6" stroke-width="1"/>
<rect x="826.6" y="535.3" width="9.6" height="9.4" fill="#c9d8e0" stroke="#8e979c" stroke-width="1"/>
<rect x="839.3" y="387.8" width="9.2" height="125.2" fill="#fff" stroke="#d6d6d6" stroke-width="1"/>
<rect x="839.3" y="522.5" width="9.6" height="9.6" fill="#fff" stroke="#c6c6c6" stroke-width="1"/>
<rect x="839.3" y="535.3" width="9.6" height="9.4" fill="#c9d8e0" stroke="#8e979c" stroke-width="1"/>
<rect x="852.0" y="387.8" width="9.2" height="125.2" fill="#fff" stroke="#d6d6d6" stroke-width="1"/>
<rect x="852.0" y="522.5" width="9.6" height="9.6" fill="#fff" stroke="#c6c6c6" stroke-width="1"/>
<rect x="852.0" y="535.3" width="9.6" height="9.4" fill="#c9d8e0" stroke="#8e979c" stroke-width="1"/>
<path d="M660 420.2H867" stroke="#66f066" stroke-width="1.2"/>
<path d="M660 440.8H867" stroke="#f08888" stroke-width="1.2"/>
<rect x="660.2" y="387" width="12.2" height="160.5" rx="2" fill="none" stroke="#7ea2c0" stroke-width="0.9"/>
<rect x="659.5" y="386.5" width="13.6" height="161.5" rx="2.5" fill="none" stroke="#bfe4fa" stroke-width="0.6"/>
<text x="666.3" y="529.7" font-size="5.5" font-style="italic" fill="#8a8a8a" text-anchor="middle" style="font-family:'Liberation Sans',sans-serif">30</text>
<text x="679.0" y="529.7" font-size="5.5" font-style="italic" fill="#8a8a8a" text-anchor="middle" style="font-family:'Liberation Sans',sans-serif">23</text>
<text x="691.7" y="529.7" font-size="5.5" font-style="italic" fill="#8a8a8a" text-anchor="middle" style="font-family:'Liberation Sans',sans-serif">24</text>
<text x="704.4" y="529.7" font-size="5.5" font-style="italic" fill="#8a8a8a" text-anchor="middle" style="font-family:'Liberation Sans',sans-serif">21</text>
<text x="717.1" y="529.7" font-size="5.5" font-style="italic" fill="#8a8a8a" text-anchor="middle" style="font-family:'Liberation Sans',sans-serif">32</text>
<text x="729.8" y="529.7" font-size="5.5" font-style="italic" fill="#8a8a8a" text-anchor="middle" style="font-family:'Liberation Sans',sans-serif">3</text>
<text x="742.5" y="529.7" font-size="5.5" font-style="italic" fill="#8a8a8a" text-anchor="middle" style="font-family:'Liberation Sans',sans-serif">20</text>
<text x="755.2" y="529.7" font-size="5.5" font-style="italic" fill="#8a8a8a" text-anchor="middle" style="font-family:'Liberation Sans',sans-serif">22</text>
<text x="767.9" y="529.7" font-size="5.5" font-style="italic" fill="#8a8a8a" text-anchor="middle" style="font-family:'Liberation Sans',sans-serif">5</text>
<text x="780.6" y="529.7" font-size="5.5" font-style="italic" fill="#8a8a8a" text-anchor="middle" style="font-family:'Liberation Sans',sans-serif">4</text>
<text x="793.3" y="529.7" font-size="5.5" font-style="italic" fill="#8a8a8a" text-anchor="middle" style="font-family:'Liberation Sans',sans-serif">31</text>
<text x="806.0" y="529.7" font-size="5.5" font-style="italic" fill="#8a8a8a" text-anchor="middle" style="font-family:'Liberation Sans',sans-serif">29</text>
<text x="818.7" y="529.7" font-size="5.5" font-style="italic" fill="#8a8a8a" text-anchor="middle" style="font-family:'Liberation Sans',sans-serif">26</text>
<text x="831.4" y="529.7" font-size="5.5" font-style="italic" fill="#8a8a8a" text-anchor="middle" style="font-family:'Liberation Sans',sans-serif">7</text>
<text x="666.3" y="542.3" font-size="5.5" fill="#8a9498" text-anchor="middle" style="font-family:'Liberation Sans',sans-serif">0</text>
<text x="679.0" y="542.3" font-size="5.5" fill="#8a9498" text-anchor="middle" style="font-family:'Liberation Sans',sans-serif">1</text>
<text x="691.7" y="542.3" font-size="5.5" fill="#8a9498" text-anchor="middle" style="font-family:'Liberation Sans',sans-serif">2</text>
<text x="704.4" y="542.3" font-size="5.5" fill="#8a9498" text-anchor="middle" style="font-family:'Liberation Sans',sans-serif">3</text>
<text x="717.1" y="542.3" font-size="5.5" fill="#8a9498" text-anchor="middle" style="font-family:'Liberation Sans',sans-serif">4</text>
<text x="729.8" y="542.3" font-size="5.5" fill="#8a9498" text-anchor="middle" style="font-family:'Liberation Sans',sans-serif">5</text>
<text x="742.5" y="542.3" font-size="5.5" fill="#8a9498" text-anchor="middle" style="font-family:'Liberation Sans',sans-serif">6</text>
<text x="755.2" y="542.3" font-size="5.5" fill="#8a9498" text-anchor="middle" style="font-family:'Liberation Sans',sans-serif">7</text>
<text x="767.9" y="542.3" font-size="5.5" fill="#8a9498" text-anchor="middle" style="font-family:'Liberation Sans',sans-serif">8</text>
<text x="780.6" y="542.3" font-size="5.5" fill="#8a9498" text-anchor="middle" style="font-family:'Liberation Sans',sans-serif">9</text>
<text x="793.3" y="542.3" font-size="5.5" fill="#8a9498" text-anchor="middle" style="font-family:'Liberation Sans',sans-serif">10</text>
<text x="806.0" y="542.3" font-size="5.5" fill="#8a9498" text-anchor="middle" style="font-family:'Liberation Sans',sans-serif">11</text>
<text x="818.7" y="542.3" font-size="5.5" fill="#8a9498" text-anchor="middle" style="font-family:'Liberation Sans',sans-serif">12</text>
<text x="831.4" y="542.3" font-size="5.5" fill="#8a9498" text-anchor="middle" style="font-family:'Liberation Sans',sans-serif">13</text>
<text x="844.1" y="542.3" font-size="5.5" fill="#8a9498" text-anchor="middle" style="font-family:'Liberation Sans',sans-serif">14</text>
<text x="856.8" y="542.3" font-size="5.5" fill="#8a9498" text-anchor="middle" style="font-family:'Liberation Sans',sans-serif">15</text>
<clipPath id="cp14"><rect x="839.3" y="522.5" width="9.6" height="9.6"/></clipPath>
<g clip-path="url(#cp14)" fill="none" stroke="#8c8c8c" stroke-width="1.7"><path d="M843.2 522.8A3.6 3.6 0 0 1 839.5999999999999 526.4"/><path d="M846.5 522.8A6.9 6.9 0 0 1 839.5999999999999 529.6999999999999"/><path d="M849.8 522.8A10.2 10.2 0 0 1 839.5999999999999 533.0"/></g>
<circle cx="840.8" cy="524.0" r="1" fill="#777"/>
<clipPath id="cp15"><rect x="852.0" y="522.5" width="9.6" height="9.6"/></clipPath>
<g clip-path="url(#cp15)" fill="none" stroke="#8c8c8c" stroke-width="1.7"><path d="M855.9 522.8A3.6 3.6 0 0 1 852.3 526.4"/><path d="M859.2 522.8A6.9 6.9 0 0 1 852.3 529.6999999999999"/><path d="M862.5 522.8A10.2 10.2 0 0 1 852.3 533.0"/></g>
<circle cx="853.5" cy="524.0" r="1" fill="#777"/>
<text x="641" y="530.5" font-size="6.5" font-weight="bold" fill="#707070" style="font-family:'Liberation Sans',sans-serif">PRN</text>
<text x="641" y="542.8" font-size="6.5" font-weight="bold" fill="#707070" style="font-family:'Liberation Sans',sans-serif" letter-spacing="1">Cn.</text>
<text x="641" y="556.5" font-size="5.8" fill="#a0a8b0" style="font-family:'Liberation Sans',sans-serif">PRN:</text>
<rect x="639" y="560.2" width="8" height="6" fill="#12b0ec"/><rect x="639" y="569.2" width="8" height="6" fill="#c8359e"/>
<text x="650" y="566" font-size="6" fill="#98a0a8" style="font-family:'Liberation Sans',sans-serif">L1C/A</text><text x="677" y="566" font-size="6" fill="#98a0a8" style="font-family:'Liberation Sans',sans-serif">49.03 dB-Hz</text>
<text x="650" y="575.5" font-size="6" fill="#98a0a8" style="font-family:'Liberation Sans',sans-serif">L2P(Y)</text><text x="677" y="575.5" font-size="6" fill="#98a0a8" style="font-family:'Liberation Sans',sans-serif">33.79 dB-Hz</text>
<path d="M725.5 558V586M809.7 557V585.5" stroke="#94b0c6" stroke-width="1"/>
<rect x="812.5" y="555.5" width="56" height="30.5" fill="#dde6f0" stroke="#8aa8c0" stroke-width="1.5"/>
<g font-size="7.6" fill="#222" text-anchor="end" style="font-family:'Liberation Sans',sans-serif"><text x="859.5" y="564">Good (&gt; 45)</text><text x="859.5" y="573.5">Average(&gt;35)</text><text x="859.5" y="583">Poor (&lt;35)</text></g>
<rect x="864" y="558" width="2.5" height="26" fill="url(#cbar)"/>
</svg>

<!-- DOP -->
<div class="a" style="left:953px;top:347px;width:205px;height:199px;background:#fff"></div>
<svg class="a" style="left:953px;top:347px" width="205" height="199" viewBox="953 347 205 199">
<path d="M970 358.5H1153" stroke="#e9e9e9" stroke-width="1"/>
<path d="M970 362.5H1153" stroke="#e9e9e9" stroke-width="1"/>
<path d="M970 366.5H1153" stroke="#e9e9e9" stroke-width="1"/>
<path d="M970 371.5H1153" stroke="#e9e9e9" stroke-width="1"/>
<path d="M970 377.5H1153" stroke="#e9e9e9" stroke-width="1"/>
<path d="M970 384.5H1153" stroke="#e9e9e9" stroke-width="1"/>
<path d="M970 392.5H1153" stroke="#e9e9e9" stroke-width="1"/>
<path d="M970 403.5H1153" stroke="#e9e9e9" stroke-width="1"/>
<path d="M970 419.5H1153" stroke="#e9e9e9" stroke-width="1"/>
<path d="M970 445.5H1153" stroke="#e9e9e9" stroke-width="1"/>
<path d="M970 449.5H1153" stroke="#e9e9e9" stroke-width="1"/>
<path d="M970 454.5H1153" stroke="#e9e9e9" stroke-width="1"/>
<path d="M970 459.5H1153" stroke="#e9e9e9" stroke-width="1"/>
<path d="M970 465.5H1153" stroke="#e9e9e9" stroke-width="1"/>
<path d="M970 472.5H1153" stroke="#e9e9e9" stroke-width="1"/>
<path d="M970 480.5H1153" stroke="#e9e9e9" stroke-width="1"/>
<path d="M970 491.5H1153" stroke="#e9e9e9" stroke-width="1"/>
<path d="M970 507.5H1153" stroke="#e9e9e9" stroke-width="1"/>
<path d="M970.5 357.5V541" stroke="#e4e4e4" stroke-width="1"/>
<path d="M1007.5 357.5V541" stroke="#e4e4e4" stroke-width="1"/>
<path d="M1043.5 357.5V541" stroke="#e4e4e4" stroke-width="1"/>
<path d="M1080.5 357.5V541" stroke="#e4e4e4" stroke-width="1"/>
<path d="M1117.5 357.5V541" stroke="#e4e4e4" stroke-width="1"/>
<path d="M1153.5 357.5V541" stroke="#e4e4e4" stroke-width="1"/>
<rect x="970" y="464.4" width="36" height="76.3" fill="#a5383a"/>
<rect x="1007" y="452" width="35.5" height="88.7" fill="#3f93bb"/>
<rect x="1044" y="463.9" width="34.799999999999955" height="76.8" fill="#87a350"/>
<rect x="1080" y="462.6" width="35.59999999999991" height="78.1" fill="#8b4aab"/>
<rect x="1117" y="444.2" width="35.200000000000045" height="96.5" fill="#a88836"/>
<text x="956" y="362.2" font-size="7.6" fill="#505050" style="font-family:'Liberation Sans',sans-serif" letter-spacing="-0.2">100</text>
<text x="956" y="389.0" font-size="8.4" fill="#505050" style="font-family:'Liberation Sans',sans-serif" >50</text>
<text x="956" y="424.0" font-size="8.4" fill="#505050" style="font-family:'Liberation Sans',sans-serif" >20</text>
<text x="956" y="450.0" font-size="8.4" fill="#505050" style="font-family:'Liberation Sans',sans-serif" >10</text>
<text x="956" y="473.6" font-size="8.4" fill="#505050" style="font-family:'Liberation Sans',sans-serif" >5</text>
<text x="956" y="501.0" font-size="8.4" fill="#505050" style="font-family:'Liberation Sans',sans-serif" >2</text>
<text x="956" y="517.6" font-size="8.4" fill="#505050" style="font-family:'Liberation Sans',sans-serif" >1</text>
</svg>
<div class="a" style="left:953px;top:554px;width:206px;height:35px;background:#dde6f0;border:1.5px solid #8aa8c0"></div>
<div class="a" style="left:993.8px;top:555px;width:1.5px;height:33px;background:#8aa8c0"></div>
<div class="a" style="left:1034.8px;top:555px;width:1.5px;height:33px;background:#8aa8c0"></div>
<div class="a" style="left:1075.8px;top:555px;width:1.5px;height:33px;background:#8aa8c0"></div>
<div class="a" style="left:1116.9px;top:555px;width:1.5px;height:33px;background:#8aa8c0"></div>
<div class="a" style="left:953px;top:563px;width:41.299999999999955px;text-align:center;font-size:8px;line-height:9.5px;font-weight:bold;color:#c41a1a;letter-spacing:0">HDOP</div>
<div class="a" style="left:953px;top:572.5px;width:41.299999999999955px;text-align:center;font-size:8.3px;line-height:9.5px;color:#202020">5.913</div>
<div class="a" style="left:994.3px;top:563px;width:41.0px;text-align:center;font-size:8px;line-height:9.5px;font-weight:bold;color:#1f78b8;letter-spacing:0">PDOP</div>
<div class="a" style="left:994.3px;top:572.5px;width:41.0px;text-align:center;font-size:8.3px;line-height:9.5px;color:#202020">8.438</div>
<div class="a" style="left:1035.3px;top:563px;width:41.0px;text-align:center;font-size:8px;line-height:9.5px;font-weight:bold;color:#5c9a12;letter-spacing:0">VDOP</div>
<div class="a" style="left:1035.3px;top:572.5px;width:41.0px;text-align:center;font-size:8.3px;line-height:9.5px;color:#202020">6.020</div>
<div class="a" style="left:1076.3px;top:563px;width:41.100000000000136px;text-align:center;font-size:8px;line-height:9.5px;font-weight:bold;color:#6e22a0;letter-spacing:0">TDOP</div>
<div class="a" style="left:1076.3px;top:572.5px;width:41.100000000000136px;text-align:center;font-size:8.3px;line-height:9.5px;color:#202020">6.269</div>
<div class="a" style="left:1117.4px;top:563px;width:41.09999999999991px;text-align:center;font-size:8px;line-height:9.5px;font-weight:bold;color:#b0801a;letter-spacing:0">GDOP</div>
<div class="a" style="left:1117.4px;top:572.5px;width:41.09999999999991px;text-align:center;font-size:8.3px;line-height:9.5px;color:#202020">10.512</div>
</body></html>
